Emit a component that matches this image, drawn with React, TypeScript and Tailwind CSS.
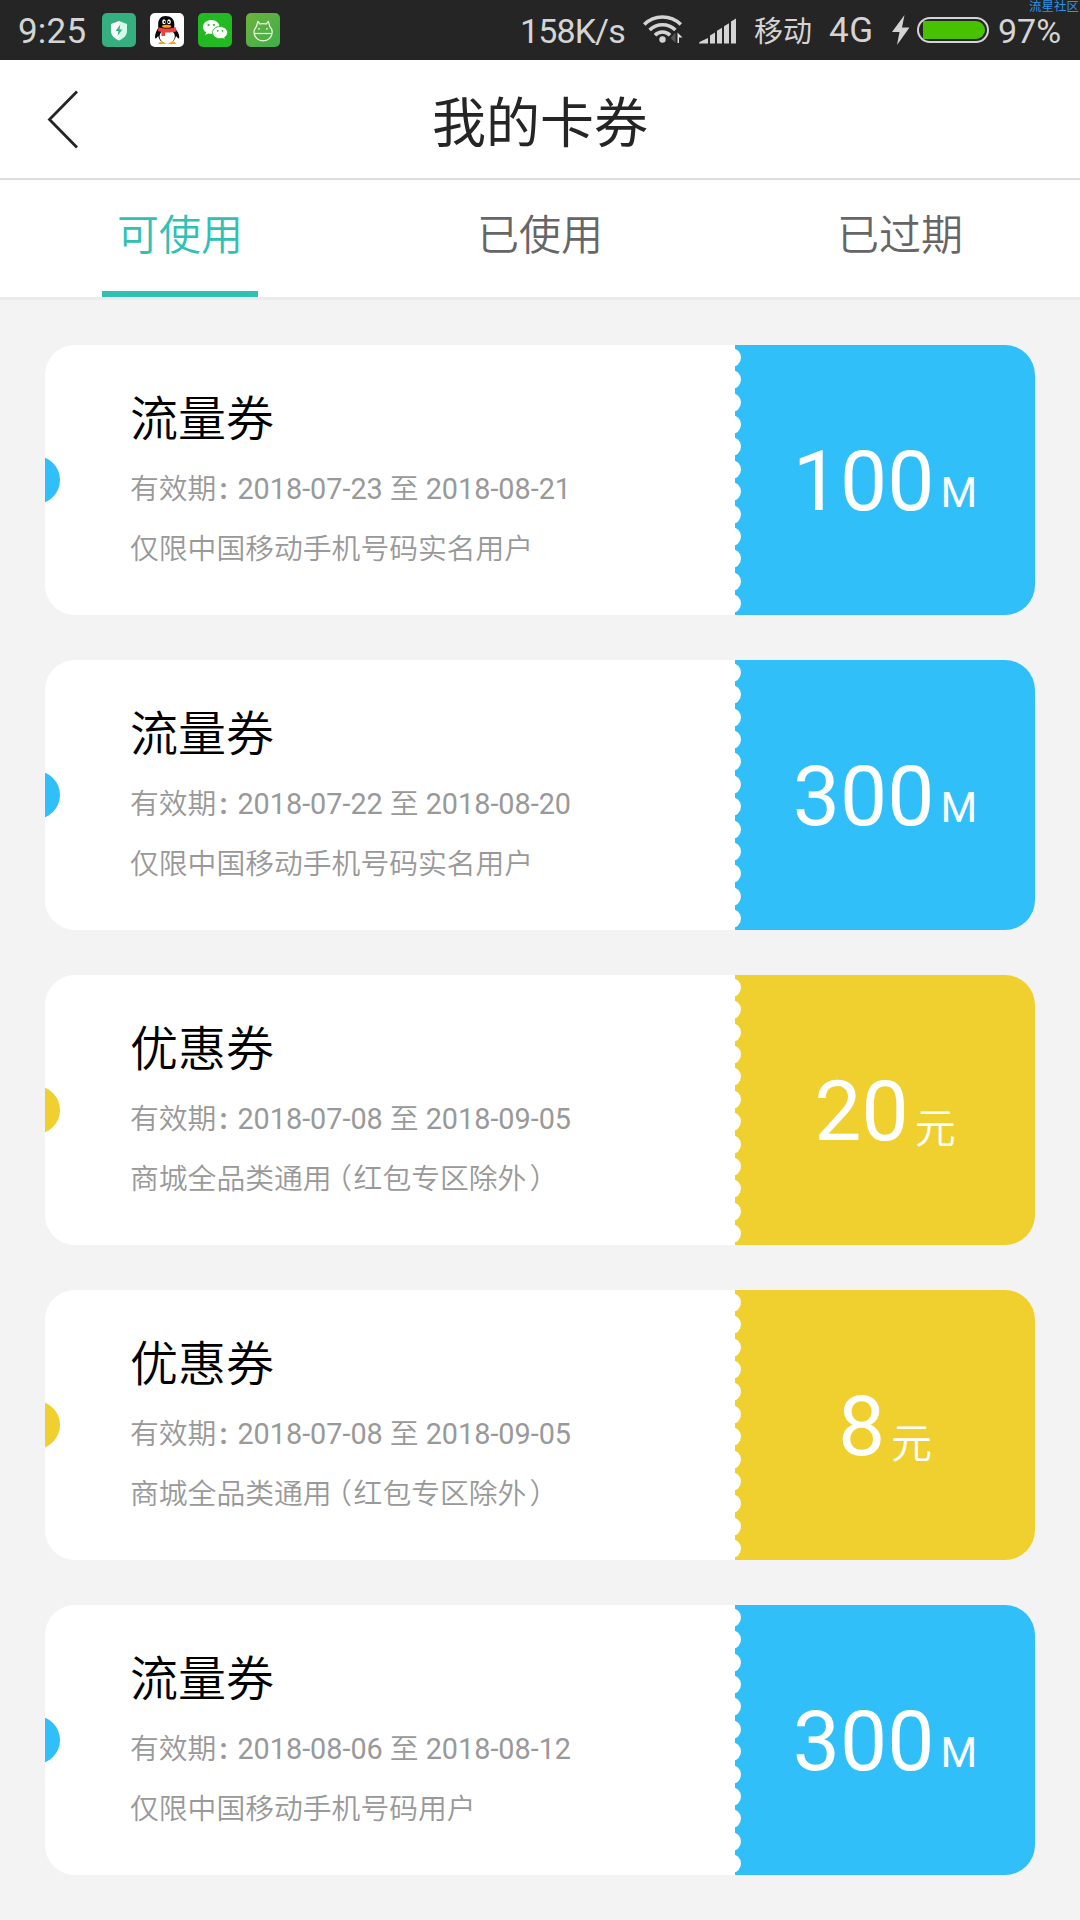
import clsx from "clsx";

interface Coupon {
	id: number;
	title: string;
	from: string;
	to: string;
	note: string;
	scope?: string;
	amount: string;
	unit: "M" | "元";
}

const coupons: Coupon[] = [
	{
		id: 1,
		title: "流量券",
		from: "2018-07-23",
		to: "2018-08-21",
		note: "仅限中国移动手机号码实名用户",
		amount: "100",
		unit: "M",
	},
	{
		id: 2,
		title: "流量券",
		from: "2018-07-22",
		to: "2018-08-20",
		note: "仅限中国移动手机号码实名用户",
		amount: "300",
		unit: "M",
	},
	{
		id: 3,
		title: "优惠券",
		from: "2018-07-08",
		to: "2018-09-05",
		note: "商城全品类通用",
		scope: "红包专区除外",
		amount: "20",
		unit: "元",
	},
	{
		id: 4,
		title: "优惠券",
		from: "2018-07-08",
		to: "2018-09-05",
		note: "商城全品类通用",
		scope: "红包专区除外",
		amount: "8",
		unit: "元",
	},
	{
		id: 5,
		title: "流量券",
		from: "2018-08-06",
		to: "2018-08-12",
		note: "仅限中国移动手机号码用户",
		amount: "300",
		unit: "M",
	},
];

const tabs = ["可使用", "已使用", "已过期"];

function ShieldIcon() {
	return (
		<svg viewBox="0 0 34 34" className="size-[34px]">
			<rect width="34" height="34" rx="5" fill="#35ae80" />
			<path d="M17 8l8 3v7c0 4.500-3.500 7.500-8 9.500z" fill="#d3fbe9" />
			<path d="M17 8l-8 3v7c0 4.500 3.500 7.500 8 9.500z" fill="#fff" />
			<path d="M18.300 11.500l-4.600 6.500h2.800l-1 5 4.800-6.500h-2.800z" fill="#35ae80" />
		</svg>
	);
}

function QQIcon() {
	return (
		<svg viewBox="0 0 34 34" className="size-[34px]">
			<rect width="34" height="34" rx="5" fill="#fff" />
			<path
				d="M15.500 3c-4.600 0-7.300 3.400-7.300 8v4C6.500 17.500 5 21 5 24c0 1.500.700 2 2 .500l1.200-1.500C9.500 28 12.500 30 17 30s7.800-2 9-7l1.300 1.500c1.300 1.500 2 1 2-.500 0-3-2-6.500-5-9v-4C24.300 6.400 21 3 15.500 3z"
				fill="#080808"
			/>
			<ellipse cx="17.200" cy="23.500" rx="7.600" ry="7" fill="#fff" />
			<path d="M8.500 31c0-1.800 2-2.800 4-2.500l4.500 2.500zM17.500 31l4.500-2.500c2-.300 4 .700 4 2.500z" fill="#f9a70a" />
			<path d="M8.600 14.200c5 1.800 12 1.800 17 0l1 4c-3.500 1.200-7.500 1.400-11.600 1.300V23h-3.500v-4L8 18z" fill="#ef4141" />
			<ellipse cx="14" cy="8.700" rx="1.800" ry="2.500" fill="#fff" />
			<ellipse cx="19" cy="8.700" rx="1.800" ry="2.500" fill="#fff" />
			<circle cx="14.500" cy="9" r="0.900" fill="#080808" />
			<circle cx="18.700" cy="9" r="0.900" fill="#080808" />
			<ellipse cx="16.600" cy="13.200" rx="4.600" ry="1.500" fill="#f9a70a" />
		</svg>
	);
}

function WeChatIcon() {
	return (
		<svg viewBox="0 0 34 34" className="size-[34px]">
			<rect width="34" height="34" rx="5" fill="#22b922" />
			<path
				d="M13.300 7C8.700 7 5 10 5 13.900c0 2.200 1.100 4.100 3.100 5.400l-.900 2.700 3.100-1.600c1 .300 2 .400 3 .400 4.600 0 8.300-3 8.300-6.900S17.900 7 13.300 7z"
				fill="#fff"
			/>
			<path
				d="M22 13.500c-4.200 0-7.500 2.700-7.500 6.100s3.300 6.100 7.500 6.100c.900 0 1.800-.100 2.600-.400l2.700 1.500-.700-2.400c1.800-1.100 3-2.800 3-4.800 0-3.400-3.400-6.100-7.600-6.100z"
				fill="#fff"
				stroke="#22b922"
				strokeWidth="0.900"
			/>
			<g fill="#22b922">
				<circle cx="10.500" cy="12" r="1.100" />
				<circle cx="16" cy="12" r="1.100" />
				<circle cx="19.700" cy="17.800" r="0.900" />
				<circle cx="24.500" cy="17.800" r="0.900" />
			</g>
		</svg>
	);
}

function AndroidIcon() {
	return (
		<svg viewBox="0 0 34 34" className="size-[34px]">
			<defs>
				<linearGradient id="android-bg" x1="0" y1="0" x2="1" y2="1">
					<stop offset="0" stopColor="#6cb33e" />
					<stop offset="1" stopColor="#3fae49" />
				</linearGradient>
			</defs>
			<rect width="34" height="34" rx="5" fill="url(#android-bg)" />
			<g fill="none" stroke="#f2fbe9" strokeWidth="1.200" strokeLinejoin="round">
				<path d="M11.800 8.300l2.200 2.700c2-.600 4.200-.600 6.200 0l2.200-2.700 1.300 5.200c1.700 1.600 2.500 3.500 2.500 5.500 0 5.200-4 8.800-9.100 8.800S8 24.200 8 19c0-2 .800-3.900 2.500-5.500z" />
				<path d="M8 20.500h18" />
			</g>
			<circle cx="13" cy="15.800" r="0.900" fill="#f2fbe9" />
			<circle cx="21" cy="15.800" r="0.900" fill="#f2fbe9" />
		</svg>
	);
}

function WifiIcon() {
	return (
		<svg viewBox="0 0 40 30" className="h-[30px] w-10">
			<g fill="none" stroke="#d4d4d4" strokeWidth="3.600">
				<path d="M1.200 10.500a26 26 0 0 1 36.600 0" />
				<path d="M6.600 16a18.500 18.500 0 0 1 25.800 0" />
				<path d="M12 21.200a10.500 10.500 0 0 1 15 0" />
			</g>
			<circle cx="19.500" cy="25.500" r="3.200" fill="#d4d4d4" />
			<path d="M32.500 18.500V29l-4.800-5z" fill="#555" />
			<path d="M34.500 18.500l5 5H36V29h-1.500z" fill="#e4e4e4" />
		</svg>
	);
}

function SignalIcon() {
	return (
		<svg viewBox="0 0 38 26" className="h-[26px] w-[38px]" fill="#d4d4d4">
			<path d="M0 25.500c0-1 .500-1.500 1.500-2L9 20v5.500z" />
			<path d="M11 17.500l5-3v11h-5z" />
			<path d="M18 12.800l5-3v15.700h-5z" />
			<path d="M25 8.200l5-3v20.300h-5z" />
			<path d="M32 3.500L37 .500v25h-5z" />
		</svg>
	);
}

function StatusBar() {
	return (
		<div className="relative flex h-[60px] items-center bg-[#252525] text-[#d4d4d4]">
			<span className="ml-[18px] w-[84px] pt-[3px] text-[35px] leading-[60px] tracking-[0.2px]">9:25</span>
			<div className="flex gap-[14px]">
				<ShieldIcon />
				<QQIcon />
				<WeChatIcon />
				<AndroidIcon />
			</div>
			<span className="ml-[240px] w-[123px] pt-[2px] text-[34px] leading-[60px] tracking-[-0.9px] whitespace-nowrap">
				158K/s
			</span>
			<div className="-mt-[2px] flex">
				<WifiIcon />
			</div>
			<div className="mt-px ml-4 flex">
				<SignalIcon />
			</div>
			<span className="ml-[17px] w-[75px] pt-[3px] text-[29px] leading-[60px] whitespace-nowrap">移动</span>
			<span className="w-[63px] pt-[2px] text-[35px] leading-[60px] tracking-[0.5px]">4G</span>
			<svg viewBox="0 0 18 30" className="h-[30px] w-[18px]" fill="#d4d4d4">
				<path d="M12.500 0L0 17h7.500L5 30 17.500 12.500H10z" />
			</svg>
			<div className="ml-[7px] flex h-[26px] w-[72px] rounded-full border-2 border-[#d4d4d4] py-[2px] pr-[2px] pl-[4px]">
				<div className="w-full rounded-r-full rounded-l-[7px] bg-[#48c200]" />
			</div>
			<span className="ml-[9px] pt-[2px] text-[34px] leading-[60px]">97%</span>
			<span className="absolute top-0 right-0 w-[51px] text-[12.500px] leading-[13px] whitespace-nowrap text-[#2b94e8]">
				流星社区
			</span>
		</div>
	);
}

function Header() {
	return (
		<header className="flex h-[120px] items-center justify-center border-b-2 border-[#dcdcdc] bg-white">
			<svg
				viewBox="0 0 32 60"
				className="ml-[47px] h-[60px] w-8"
				fill="none"
				stroke="#252525"
				strokeWidth="2.800"
			>
				<path d="M30 2.500L2.500 30.500l27.500 28" />
			</svg>
			<h1 className="mr-[79px] flex-1 pt-[11px] text-center text-[54px] leading-[60px] text-[#252525]">我的卡券</h1>
		</header>
	);
}

function TabBar() {
	return (
		<nav className="flex h-[120px] border-b-[3px] border-[#ebebeb] bg-white">
			{tabs.map((tab, index) => (
				<button key={tab} type="button" className="flex flex-1 flex-col items-center">
					<span
						className={clsx(
							"h-[111px] text-[42px] leading-[112px] font-[350]",
							index === 0 ? "text-[#31c1b2]" : "text-[#666]",
						)}
					>
						{tab}
					</span>
					{index === 0 && <span className="h-[6px] w-[156px] bg-[#31c1b2]" />}
				</button>
			))}
		</nav>
	);
}

function CouponCard({ coupon }: { coupon: Coupon }) {
	const isData = coupon.unit === "M";
	const color = isData ? "bg-[#31bff9]" : "bg-[#efd02f]";

	return (
		<article className="relative flex h-[270px] overflow-hidden rounded-[30px] bg-white">
			<span className={clsx("absolute top-[111px] -left-[33px] size-12 rounded-full", color)} />
			<div className="w-[690px] pl-[85px]">
				<h2 className="mt-[45px] text-[48px] leading-[60px] font-[350] text-black">{coupon.title}</h2>
				<p className="mt-[18px] flex text-[28.800px] leading-[43px] whitespace-pre text-[#999]">
					<span className="font-[350]">有效期</span>
					<span className="w-[21px] pl-[3px] font-bold">:</span>
					<span>{coupon.from}</span>
					<span className="font-[350]"> 至 </span>
					<span>{coupon.to}</span>
				</p>
				<p className="mt-[17px] flex text-[28.800px] leading-[43px] font-[350] text-[#999]">
					{coupon.note}
					{coupon.scope && (
						<>
							<span className="w-[22px] pl-[6px] [font-feature-settings:'halt']">（</span>
							{coupon.scope}
							<span className="w-[22px] pl-[3px] [font-feature-settings:'halt']">）</span>
						</>
					)}
				</p>
			</div>
			<div className={clsx("relative flex w-[300px] items-baseline justify-center text-white", color)}>
				{/* perforated edge */}
				<div className="absolute inset-y-0 left-0 flex w-[7px] flex-col justify-around overflow-hidden pt-px">
					{Array.from({ length: 12 }).map((_, index) => (
						<span key={index} className="-ml-[13px] size-[19px] shrink-0 rounded-full bg-white" />
					))}
				</div>
				<span className="text-[84px] leading-[274px]">{coupon.amount}</span>
				<span
					className={clsx(
						"relative ml-[6px]",
						isData ? "-top-[3px] text-[42px]" : "top-[3px] text-[41px] font-[350]",
					)}
				>
					{coupon.unit}
				</span>
			</div>
		</article>
	);
}

export default function App() {
	return (
		<div className="h-[1920px] w-[1080px] overflow-hidden bg-[#f3f3f3] font-['Roboto','Noto_Sans_CJK_SC',sans-serif]">
			<StatusBar />
			<Header />
			<TabBar />
			<main className="flex flex-col gap-[45px] px-[45px] pt-[45px]">
				{coupons.map((coupon) => (
					<CouponCard key={coupon.id} coupon={coupon} />
				))}
			</main>
		</div>
	);
}
